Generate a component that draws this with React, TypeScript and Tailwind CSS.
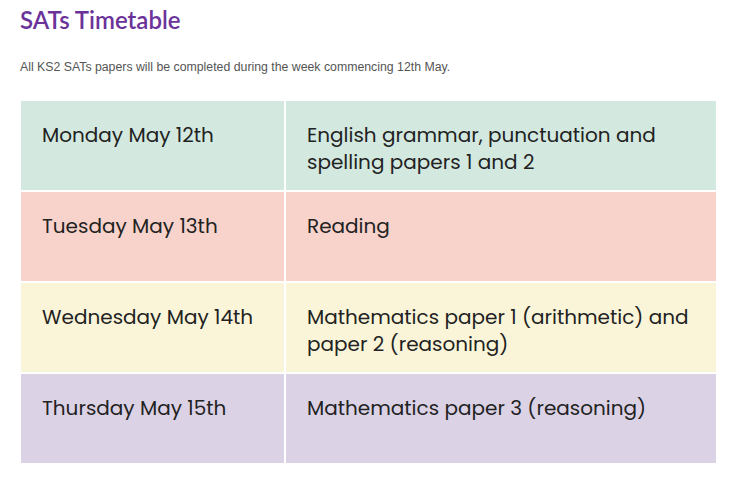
import React from 'react';

const rows = [
  { day: 'Monday May 12th', paper: 'English grammar, punctuation and spelling papers 1 and 2', bg: 'bg-[#d3e9e0]' },
  { day: 'Tuesday May 13th', paper: 'Reading', bg: 'bg-[#f8d3cb]' },
  { day: 'Wednesday May 14th', paper: 'Mathematics paper 1 (arithmetic) and paper 2 (reasoning)', bg: 'bg-[#faf5d9]' },
  { day: 'Thursday May 15th', paper: 'Mathematics paper 3 (reasoning)', bg: 'bg-[#dbd2e6]' },
];

const App: React.FC = () => {
  return (
    <div className="bg-white w-[735px] h-[491px] overflow-hidden pl-[21px] pt-[4px]">
      <h1 className="text-[24px] font-semibold text-[#6b3399] leading-[32px] font-['Lato',sans-serif] -ml-[1px]">
        SATs Timetable
      </h1>
      <p className="mt-[23px] text-[12.3px] text-[#555] leading-[16px] font-['Liberation_Sans',sans-serif] -ml-[1px]">
        All KS2 SATs papers will be completed during the week commencing 12th May.
      </p>
      <div className="mt-[26px] w-[695px] flex flex-col gap-[2px] font-['Poppins','Inter',sans-serif] text-[20px] leading-[27px] text-[#222]">
        {rows.map((r) => (
          <div key={r.day} className="flex gap-[2px] h-[89px]">
            <div className={`${r.bg} w-[263px] px-[21px] pt-[21px]`}>{r.day}</div>
            <div className={`${r.bg} flex-1 pl-[21px] pr-[20px] pt-[21px]`}>{r.paper}</div>
          </div>
        ))}
      </div>
    </div>
  );
};

export default App;
